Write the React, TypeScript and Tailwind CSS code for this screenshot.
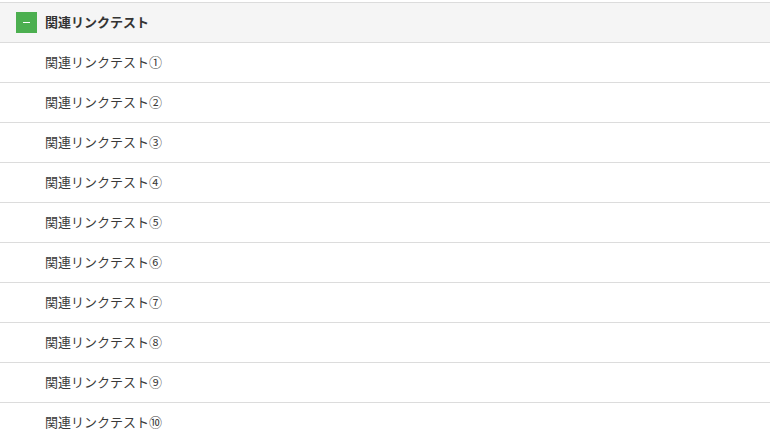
import React from "react";

const items = ["①", "②", "③", "④", "⑤", "⑥", "⑦", "⑧", "⑨", "⑩"];

export default function App() {
  return (
    <div
      className="w-[770px] h-[439px] overflow-hidden bg-white pt-[2px] text-[13px] text-[#333]"
      style={{ fontFamily: '"Noto Sans CJK JP", "Noto Sans", sans-serif' }}
    >
      <div className="flex h-[41px] items-center border-y border-[#dcdcdc] bg-[#f5f5f5] pl-4">
        <div className="mb-[1px] flex h-[21px] w-[21px] items-center justify-center bg-[#4caf50]">
          <div className="h-[1px] w-[7px] bg-white" />
        </div>
        <span className="ml-[8px] pb-[3px] font-bold leading-none">関連リンクテスト</span>
      </div>
      {items.map((n) => (
        <div
          key={n}
          className="flex h-[40px] items-center border-b border-[#dcdcdc] pl-[45px]"
        >
          <span className="pb-[3px] leading-none text-[#3a3a3a]">関連リンクテスト{n}</span>
        </div>
      ))}
    </div>
  );
}
